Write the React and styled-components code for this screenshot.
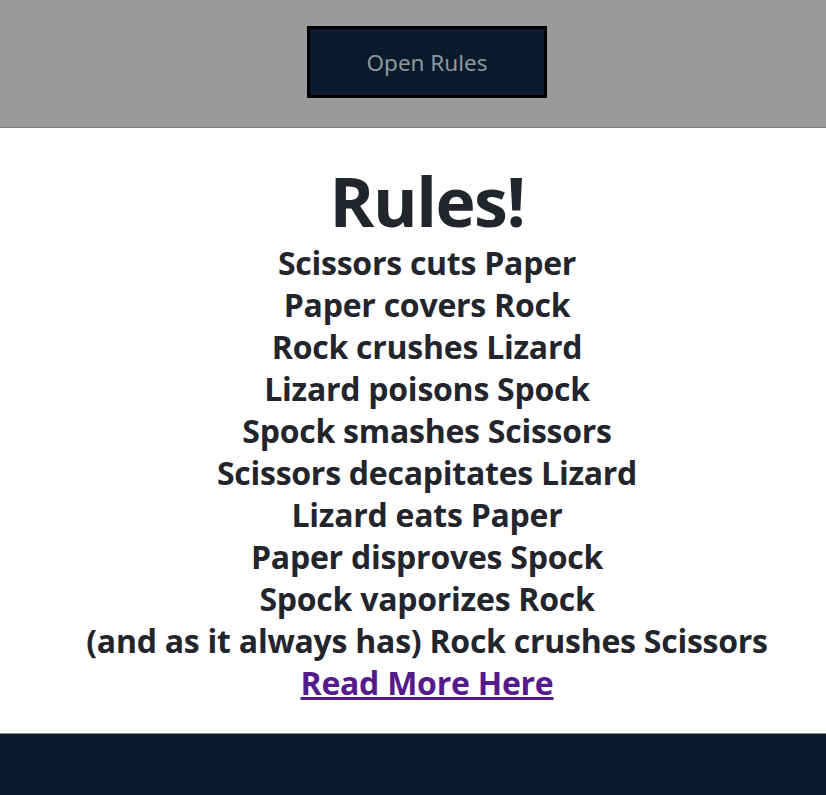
import styled, { createGlobalStyle } from 'styled-components';

const GlobalStyle = createGlobalStyle`
  html, body {
    margin: 0;
    padding: 0;
    background: #081a2b;
  }
  body {
    font-family: "Open Sans", "Noto Sans", sans-serif;
  }
`;

const Page = styled.div`
  min-height: 100vh;
  display: grid;
  grid-template-rows: auto auto 1fr;
`;

const TopBar = styled.header`
  height: 128px;
  box-sizing: border-box;
  padding: 26px 0 0 28px;
  display: flex;
  justify-content: center;
  align-items: flex-start;
  background: #9a9a9a;
  border-bottom: 1px solid #7a7a7a;
`;

const OpenButton = styled.button`
  width: 240px;
  height: 72px;
  background: #081a2b;
  border: 3px solid #000;
  color: #8e979c;
  font-family: "Noto Sans", sans-serif;
  font-size: 22.5px;
  cursor: pointer;
`;

const RulesPanel = styled.section`
  background: #fff;
  color: #23252c;
  text-align: center;
  padding: 36px 0 29px 28px;
  border-bottom: 1px solid #8a8a8a;
`;

const Title = styled.h1`
  margin: 0 0 4px;
  font-size: 68px;
  line-height: 74px;
  letter-spacing: -1.5px;
  font-weight: 700;
`;

const Rule = styled.p`
  margin: 0;
  font-size: 32px;
  line-height: 42px;
  letter-spacing: -0.25px;
  font-weight: 700;
`;

const ReadMore = styled.a`
  font-size: 32px;
  line-height: 42px;
  letter-spacing: -0.25px;
  font-weight: 700;
  color: #551a8b;
  text-decoration: underline;
`;

const Footer = styled.footer`
  background: #081a2b;
`;

const rules = [
  'Scissors cuts Paper',
  'Paper covers Rock',
  'Rock crushes Lizard',
  'Lizard poisons Spock',
  'Spock smashes Scissors',
  'Scissors decapitates Lizard',
  'Lizard eats Paper',
  'Paper disproves Spock',
  'Spock vaporizes Rock',
  '(and as it always has) Rock crushes Scissors',
];

export default function App() {
  return (
    <Page>
      <GlobalStyle />
      <TopBar>
        <OpenButton type="button">Open Rules</OpenButton>
      </TopBar>
      <RulesPanel>
        <Title>Rules!</Title>
        {rules.map((r) => <Rule key={r}>{r}</Rule>)}
        <ReadMore href="#rules">Read More Here</ReadMore>
      </RulesPanel>
      <Footer />
    </Page>
  );
}
